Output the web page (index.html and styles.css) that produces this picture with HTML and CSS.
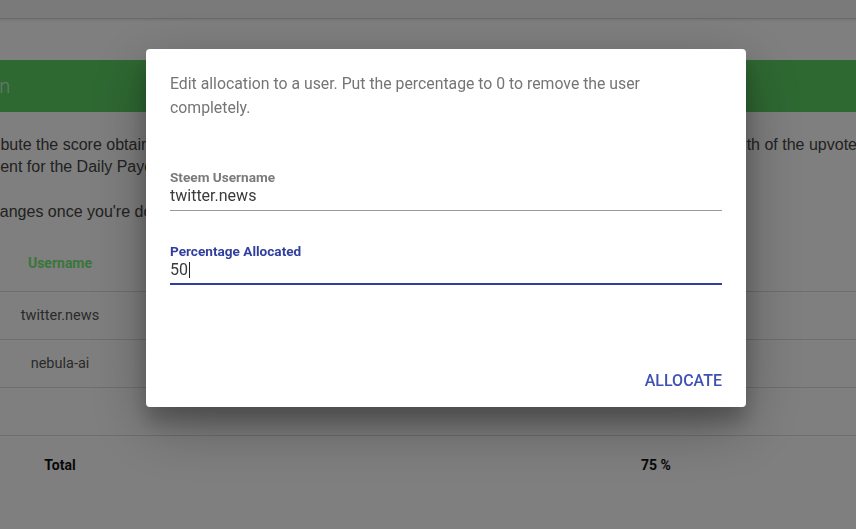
FILE: index.html
```
<!DOCTYPE html>
<html lang="en">
<head>
<meta charset="utf-8">
<title>Allocation</title>
<link rel="stylesheet" href="styles.css">
</head>
<body>
<div class="page">
  <div class="topbar"></div>
  <div class="titlebar"><span class="title">Upvote Allocation</span></div>
  <div class="intro">
    <div class="line line-first">Distribute the score obtained by your latest posts among the users listed below, in proportion to the total strength of the upvotes</div>
    <div class="line line-second">payment for the Daily Payout.</div>
  </div>
  <div class="note">Save changes once you're done.</div>
  <div class="table">
    <div class="row head"><div class="cell c1">Username</div><div class="cell c2"></div><div class="cell c3"></div></div>
    <div class="row"><div class="cell c1">twitter.news</div><div class="cell c2"></div><div class="cell c3"></div></div>
    <div class="row"><div class="cell c1">nebula-ai</div><div class="cell c2"></div><div class="cell c3"></div></div>
    <div class="row"><div class="cell c1"></div><div class="cell c2"></div><div class="cell c3"></div></div>
    <div class="row total"><div class="cell c1">Total</div><div class="cell c2"></div><div class="cell c3">75 %</div></div>
  </div>
</div>

<div class="overlay">
  <div class="dialog">
    <div class="dialog-body">
      <p class="desc">Edit allocation to a user. Put the percentage to 0 to remove the user completely.</p>
      <div class="field">
        <div class="label">Steem Username</div>
        <div class="value">twitter.news</div>
      </div>
      <div class="field focused">
        <div class="label">Percentage Allocated</div>
        <div class="value">50<span class="caret"></span></div>
      </div>
    </div>
    <div class="dialog-actions">
      <button class="btn">Allocate</button>
    </div>
  </div>
</div>
</body>
</html>
```
FILE: styles.css
```
* { box-sizing: border-box; }
html, body { margin: 0; padding: 0; }
body {
  width: 856px;
  height: 529px;
  overflow: hidden;
  background: #ffffff;
  font-family: Roboto, "Liberation Sans", sans-serif;
}
.page { width: 856px; overflow: hidden; }
.topbar {
  height: 19px;
  background: #f4f4f4;
  border-bottom: 1px solid #d4d4d4;
  box-shadow: 0 1px 3px rgba(0,0,0,0.12);
}
.titlebar {
  margin-top: 41px;
  height: 52px;
  background: #5ed264;
  display: flex;
  align-items: center;
  overflow: hidden;
}
.title {
  margin-left: -143px;
  font-size: 20px;
  font-weight: 300;
  color: rgba(255,255,255,0.7);
  white-space: nowrap;
}
.intro { margin-top: 22px; }
.line {
  font-family: "Liberation Sans", Arial, sans-serif;
  font-size: 16px;
  line-height: 22px;
  color: #444;
  white-space: nowrap;
}
.line-first { margin-left: -36px; }
.line-second { margin-left: -39px; }
.note {
  margin-top: 23px;
  margin-left: -58px;
  font-family: "Liberation Sans", Arial, sans-serif;
  font-size: 16px;
  line-height: 22px;
  color: #444;
  white-space: nowrap;
}
.table { margin-top: 12px; }
.row {
  display: grid;
  grid-template-columns: 120px 472px 128px 1fr;
  height: 48px;
  align-items: center;
  border-bottom: 1px solid #dcdcdc;
  font-size: 14.5px;
  color: #555;
}
.row.head {
  height: 57px;
  font-size: 14px;
  font-weight: 700;
  color: #74ec76;
}
.row.total {
  height: 58px;
  border-bottom: none;
  font-size: 14px;
  font-weight: 700;
  color: #111;
}
.cell { text-align: center; white-space: nowrap; }

.overlay {
  position: fixed;
  inset: 0;
  background: rgba(0,0,0,0.5);
  display: flex;
  justify-content: flex-start;
  align-items: flex-start;
  padding: 49px 0 0 146px;
}
.dialog {
  width: 600px;
  background: #fff;
  border-radius: 4px;
  box-shadow: 0 19px 60px rgba(0,0,0,0.3), 0 15px 20px rgba(0,0,0,0.22);
}
.dialog-body { padding: 23px 24px 69px; }
.desc {
  margin: 0;
  font-size: 15.8px;
  line-height: 24px;
  color: #757575;
}
.field { margin-top: 49px; }
.field + .field { margin-top: 32px; }
.label {
  font-size: 13.6px;
  font-weight: 700;
  line-height: 16px;
  color: #7a7a7a;
}
.value {
  font-size: 16px;
  line-height: 22px;
  color: #3a3a3a;
  padding-bottom: 3px;
  border-bottom: 1px solid #9a9a9a;
}
.focused .label { color: #303f9f; }
.focused .value {
  padding-bottom: 2px;
  border-bottom: 2px solid #303f9f;
}
.caret {
  display: inline-block;
  width: 1px;
  height: 16px;
  margin-left: 1px;
  background: #222;
  vertical-align: -3px;
}
.dialog-actions {
  padding: 8px 8px 9px;
  display: flex;
  justify-content: flex-end;
}
.btn {
  height: 36px;
  padding: 0 16px;
  border: none;
  background: transparent;
  font-family: Roboto, sans-serif;
  font-size: 16px;
  font-weight: 500;
  text-transform: uppercase;
  color: #3f51b5;
  letter-spacing: 0;
}
```
